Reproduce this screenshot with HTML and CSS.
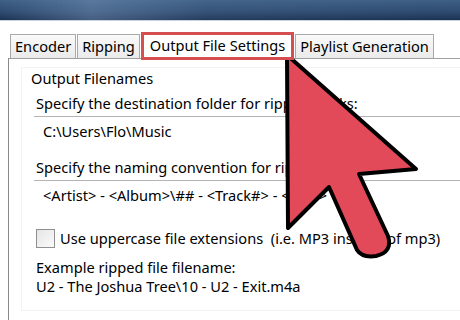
FILE: index.html
```html
<!DOCTYPE html>
<html lang="en">

<head>
    <meta charset="UTF-8">
    <title>Output File Settings</title>
    <link rel="stylesheet" href="styles.css">
</head>

<body>

    <div class="titlebar"></div>

    <div class="tabs">
        <div class="tab">Encoder</div>
        <div class="tab">Ripping</div>
        <div class="tab active">Output File Settings</div>
        <div class="tab">Playlist Generation</div>
    </div>

    <div class="panel">
        <div class="group">
            <div class="legend">Output Filenames</div>
            <div class="label">Specify the destination folder for ripped tracks:</div>
            <div class="field">C:\Users\Flo\Music</div>
            <div class="label">Specify the naming convention for ripped files:</div>
            <div class="field">&lt;Artist&gt; - &lt;Album&gt;\## - &lt;Track#&gt; - &lt;Title&gt;</div>
            <div class="check"><span class="box"></span>Use uppercase file extensions &nbsp;(i.e. MP3 instead of mp3)</div>
            <div class="example">Example ripped file filename:<br>U2 - The Joshua Tree\10 - U2 - Exit.m4a</div>
        </div>
    </div>

    <!-- big pointer arrow over the tab -->
    <svg class="arrow" width="460" height="320" viewBox="0 0 460 320">
        <path d="M287 55 L416 169 L359 174 L388 236 Q393 252 376 256 Q362 258 357 250 L329 187 L288 228 Z"
            fill="#e24a5a" stroke="#000" stroke-width="4" stroke-linejoin="round" />
    </svg>

</body>

</html>
```

FILE: styles.css
```css
body {
    margin: 0;
    background-color: #fff;
    font-family: "Noto Sans", sans-serif;
    font-size: 14.6px;
    color: #000;
    width: 460px;
    height: 320px;
    overflow: hidden;
    position: relative;
}

.titlebar {
    height: 20px;
    background: linear-gradient(to right, rgba(120, 150, 185, 0.0), rgba(120, 150, 185, 0.45) 20%, rgba(120, 150, 185, 0.1) 45%, rgba(120, 150, 185, 0.0)),
        linear-gradient(to bottom, #3f5f85, #2d4a70 60%, #1c3152);
    border-bottom: 1px solid #c9d3df;
}

.tabs {
    display: flex;
    align-items: flex-end;
    margin-top: 11px;
    padding-left: 10px;
    height: 26px;
}

.tab {
    height: 23px;
    line-height: 22px;
    padding: 0 4px;
    border: 1px solid #a9a9a9;
    border-bottom: none;
    background: linear-gradient(to bottom, #fafafa, #eaeaea);
    white-space: nowrap;
}

.tab + .tab {
    margin-left: 1px;
}

.tab.active {
    height: 22px;
    line-height: 21px;
    padding: 0 6px;
    border: 3px solid #d64f50;
    background: #fff;
    margin-bottom: -2px;
    position: relative;
    z-index: 1;
}

.panel {
    margin-left: 8px;
    border-top: 1px solid #a0a0a0;
    border-left: 1px solid #8a8a8a;
    height: 262px;
    padding: 8px 0 0 12px;
}

.group {
    border: 1px solid #f2f2f2;
    border-right: none;
    height: 242px;
    padding-left: 8px;
}

.legend {
    margin-left: 1px;
    line-height: 20px;
}

.label {
    margin-left: 6px;
    margin-top: 5px;
    line-height: 20px;
}

.field {
    margin-left: 4px;
    margin-top: 3px;
    border-top: 1px solid #b4b4b4;
    padding: 3px 0 0 9px;
    line-height: 22px;
    height: 32px;
    white-space: nowrap;
}

.check {
    display: flex;
    align-items: center;
    margin-left: 6px;
    margin-top: 12px;
    white-space: nowrap;
}

.box {
    width: 17px;
    height: 17px;
    border: 1px solid #8f8f8f;
    background: linear-gradient(135deg, #e6e6e6, #fafafa);
    margin-right: 5px;
}

.example {
    margin-left: 6px;
    margin-top: 10px;
    line-height: 19px;
    white-space: nowrap;
}

.arrow {
    position: absolute;
    left: 0;
    top: 0;
}
```
